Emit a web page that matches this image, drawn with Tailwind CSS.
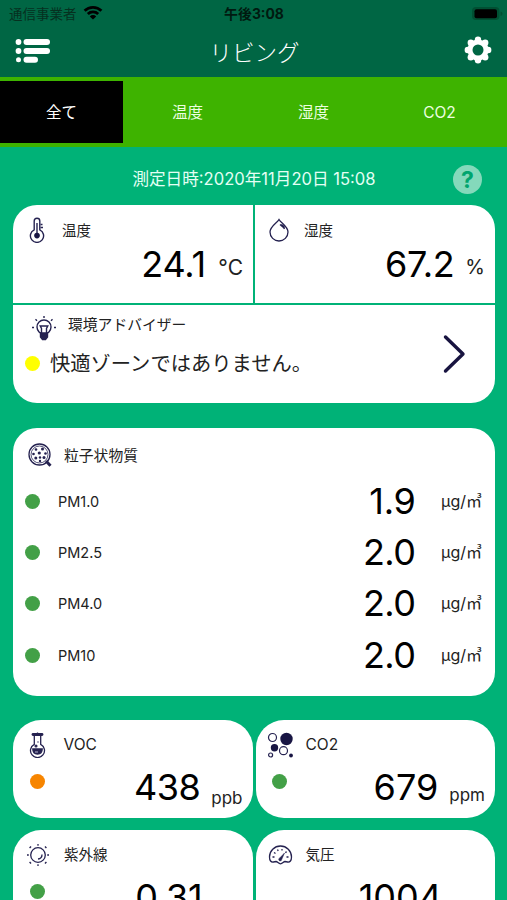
<!DOCTYPE html>
<html lang="ja">
<head>
<meta charset="utf-8">
<title>リビング</title>
<script src="https://cdn.jsdelivr.net/npm/@tailwindcss/browser@4"></script>
</head>
<body class="h-[900px] w-[507px] overflow-hidden bg-[#00b277] font-['Inter','Noto_Sans_CJK_JP',sans-serif] text-[#222]">
<header class="h-[77px] bg-[#006644]">
  <div class="grid h-7 grid-cols-3 items-center pl-[9px] pr-1 text-[13.5px] leading-7">
    <div class="flex items-center gap-1.5 text-[#06301f]"><span>通信事業者</span>
      <svg class="h-[15px] w-[20px] -mt-1" viewBox="0 0 20 15" fill="none" stroke="#000" stroke-width="2.8"><path d="M1.6 5.8a12 12 0 0 1 16.8 0M4.8 9a7.5 7.5 0 0 1 10.4 0"/><path d="M10 14.5 6.8 11.4a4.6 4.6 0 0 1 6.4 0z" fill="#000" stroke="none"/></svg>
    </div>
    <div class="-ml-1 text-center text-[13.900px] font-bold text-[#001a10]">午後3:08</div>
    <svg class="h-4 w-[32px] justify-self-end" viewBox="0 0 32 16"><rect x="1" y="1" width="27.500" height="13" rx="4" fill="#005033"/><rect x="3.500" y="3.300" width="22.500" height="9" rx="2" fill="#000"/><path d="M29.500 5.500q2 .5 2 2.300t-2 2.300z" fill="#005033"/></svg>
  </div>
  <div class="flex h-[46px] items-center justify-between px-[15px]">
    <svg class="h-[26px] w-[36px]" viewBox="0 0 36 26" fill="#fff"><circle cx="3.500" cy="4" r="2.900"/><rect x="8.500" y="1" width="26.500" height="6" rx="3"/><circle cx="3.500" cy="13" r="2.900"/><rect x="8.500" y="10" width="26.500" height="6" rx="3"/><circle cx="3.500" cy="21.700" r="2.500"/><rect x="8.500" y="18.700" width="14.500" height="6" rx="3"/></svg>
    <h1 class="pt-1 pr-[6px] text-[22.500px] font-light leading-[42px] text-white">リビング</h1>
    <svg class="-mt-[2px] h-[28px] w-[28px]" viewBox="0 0 28 28"><g fill="#fff"><circle cx="14" cy="14" r="10.500"/><circle cx="14" cy="3.800" r="3.200"/><circle cx="21.200" cy="6.800" r="3.200"/><circle cx="24.200" cy="14" r="3.200"/><circle cx="21.200" cy="21.200" r="3.200"/><circle cx="14" cy="24.200" r="3.200"/><circle cx="6.800" cy="21.200" r="3.200"/><circle cx="3.800" cy="14" r="3.200"/><circle cx="6.800" cy="6.800" r="3.200"/></g><circle cx="14" cy="14" r="5.500" fill="#006644"/></svg>
  </div>
</header>
<nav class="grid h-[70px] grid-cols-4 gap-[3px] bg-[#3eb300] py-1 pr-1.5 text-center text-[15.500px] leading-[64px] text-[#ecffe0]">
  <div class="h-[62px] bg-black text-white">全て</div><div>温度</div><div>湿度</div><div>CO2</div>
</nav>
<div class="grid h-[58px] grid-cols-[1fr_auto_1fr] pl-4 pr-[25px] pt-[18px]">
  <div></div>
  <p class="h-[27px] pl-[10px] pt-px text-[16.600px] leading-[27px] text-[#e4fff4]">測定日時:2020年11月20日 15:08</p>
  <div class="flex size-[29px] items-center justify-center justify-self-end rounded-full bg-[#84d9bb] pt-px text-[23px] font-bold text-[#00a56e]">?</div>
</div>

<main class="px-[13px] pr-3">
  <section class="h-[198px] overflow-hidden rounded-[24px]">
    <div class="grid h-[97.500px] grid-cols-[239.500px_1fr] gap-[2.500px]">
      <div class="bg-white pt-[11px]">
        <div class="flex h-[28px] items-center">
          <svg class="ml-[16px] h-[26px] w-4" viewBox="0 0 16 26" fill="none" stroke="#252250" stroke-width="1.400"><path d="M5.200 12.800V4a2.800 2.800 0 0 1 5.600 0v8.800a6.600 6.600 0 1 1-5.600 0z"/><path d="M8 6v10M11.500 7.500h2M11.500 10.500h2.500" /><circle cx="8" cy="18.600" r="2.800" fill="#181543" stroke="none"/></svg>
          <h2 class="ml-[17px] pt-px text-[14.500px] leading-7">温度</h2>
        </div>
        <div class="flex h-[41px] items-center justify-end pr-[9.500px]"><span class="text-[36px] leading-[41px] tracking-[-0.200px] text-black">24.1</span><span class="ml-[12.500px] pt-[5px] text-[21px] leading-[41px]">°C</span></div>
      </div>
      <div class="bg-white pt-[11px]">
        <div class="flex h-[28px] items-center">
          <svg class="ml-[13px] h-[24px] w-[22px]" viewBox="0 0 22 24" fill="none" stroke="#252250" stroke-width="1.300"><path d="M11 1.500C9 5 2 8.500 2 14a9 9 0 0 0 18 0C20 8.500 13 5 11 1.500z"/><path d="M12 6.500c2 1.500 3.500 2.500 4.500 4.500M13.500 6.500c1.500 1 2.500 2 3.200 3.200"/></svg>
          <h2 class="ml-[14px] pt-px text-[14.500px] leading-7">湿度</h2>
        </div>
        <div class="flex h-[41px] items-center justify-end pr-[10px]"><span class="text-[36px] leading-[41px] tracking-[-0.300px] text-black">67.2</span><span class="ml-[11px] pt-[5px] text-[20px] leading-[41px]">%</span></div>
      </div>
    </div>
    <div class="mt-[2.500px] flex h-[98px] justify-between bg-white">
      <div>
        <div class="flex h-[38px] items-center">
          <svg class="ml-[18px] mt-[9px] h-[25px] w-[26px]" viewBox="0 0 26 25" fill="none" stroke="#252250" stroke-width="1.400"><circle cx="13" cy="11" r="7"/><path d="M10.500 17v-4.500l-1.300-2.500h7.600l-1.300 2.500v4.500"/><path d="M9.500 17h7v4l-2 2.500h-3l-2-2.500z" fill="#252250"/><path d="M13 0v2M4.500 3.200 6 4.700M21.500 3.200 20 4.700M1 11.500h2M23 11.500h2"/></svg>
          <h2 class="ml-[11px] pt-px text-[14.800px] leading-[38px]">環境アドバイザー</h2>
        </div>
        <div class="flex h-[40px] items-center"><span class="ml-[12px] mt-px size-[15px] rounded-full bg-[#ffff00]"></span><span class="ml-[10px] pt-[2px] text-[20.300px] leading-[40px]">快適ゾーンではありません。</span></div>
      </div>
      <svg class="mr-[29px] mt-[29px] h-[40px] w-[24px]" viewBox="0 0 24 40" fill="none" stroke="#181440" stroke-width="3.400" stroke-linecap="round" stroke-linejoin="round"><path d="M3.500 3 21 20 3.500 37"/></svg>
    </div>
  </section>

  <section class="mt-[24.500px] h-[268.500px] rounded-[24px] bg-white pt-[11px]">
    <div class="flex h-[36.500px] items-center pb-[2px]">
      <svg class="ml-[15px] h-[25px] w-[25px]" viewBox="0 0 25 25" fill="none" stroke="#252250" stroke-width="1.300"><circle cx="11.500" cy="11.500" r="10.500"/><circle cx="11.500" cy="11.500" r="8.500" stroke-width=".8"/><path d="m18 18 4.500 4.700" stroke-width="3"/><g fill="#252250" stroke="none"><circle cx="8" cy="6.500" r="1.300"/><circle cx="14.500" cy="6" r="1.500"/><circle cx="5.500" cy="11" r="1.300"/><circle cx="11.300" cy="10" r="1.600"/><circle cx="17.500" cy="10.500" r="1.300"/><circle cx="7.800" cy="15" r="1.500"/><circle cx="12" cy="14.500" r="1.200"/><circle cx="16" cy="14.500" r="1.500"/><circle cx="12" cy="18" r="1.200"/></g></svg>
      <h2 class="ml-[11px] text-[14.800px] leading-[34px]">粒子状物質</h2>
    </div>
    <div class="grid grid-rows-[repeat(4,51.300px)] pl-3 pr-[13px] pt-[0.500px] text-[14.500px] leading-[51px]">
      <div class="flex items-center"><span class="size-[15px] rounded-full bg-[#43a047]"></span><span class="ml-[18px] flex-1">PM1.0</span><span class="text-[36px] tracking-[-0.300px] text-black">1.9</span><span class="w-[66.500px] text-right text-[16px]">µg/㎥</span></div>
      <div class="flex items-center"><span class="size-[15px] rounded-full bg-[#43a047]"></span><span class="ml-[18px] flex-1">PM2.5</span><span class="text-[36px] tracking-[-0.500px] text-black">2.0</span><span class="w-[66.500px] text-right text-[16px]">µg/㎥</span></div>
      <div class="flex items-center"><span class="size-[15px] rounded-full bg-[#43a047]"></span><span class="ml-[18px] flex-1">PM4.0</span><span class="text-[36px] tracking-[-0.500px] text-black">2.0</span><span class="w-[66.500px] text-right text-[16px]">µg/㎥</span></div>
      <div class="flex items-center"><span class="size-[15px] rounded-full bg-[#43a047]"></span><span class="ml-[18px] flex-1">PM10</span><span class="text-[36px] tracking-[-0.500px] text-black">2.0</span><span class="w-[66.500px] text-right text-[16px]">µg/㎥</span></div>
    </div>
  </section>

  <div class="mt-[24px] grid grid-cols-[239.500px_239.500px] gap-x-[3px] gap-y-[12px]">
    <section class="h-[98px] rounded-[28px] bg-white pt-[11px]">
      <div class="flex h-[28px] items-center">
        <svg class="ml-[16px] h-[26px] w-[17px]" viewBox="0 0 17 26" fill="none" stroke="#252250" stroke-width="1.300"><path d="M5.300 3.500v8.800a7 7 0 1 0 6.400 0V3.500"/><path d="M4 2.500h9" stroke-width="2.800" stroke-linecap="round"/><path d="M8.500.5v1"/><path d="M3.800 17h9.400c0 3-2 5-4.700 5s-4.700-2-4.700-5z" fill="#252250"/><circle cx="7" cy="14" r=".9"/><path d="M9 9v2M6 20h3" stroke="#8885a5"/></svg>
        <h2 class="ml-[17.500px] text-[15.500px] leading-7">VOC</h2>
      </div>
      <div class="flex h-[56px] pl-[17px] pr-[10px]"><span class="mt-[15px] size-[15px] rounded-full bg-[#f78500]"></span><span class="flex-1 text-right text-[36px] leading-[56px] tracking-[-0.500px] text-black">438</span><span class="ml-[11px] pt-[11px] text-[17px] leading-[56px]">ppb</span></div>
    </section>
    <section class="h-[98px] rounded-[28px] bg-white pt-[11px]">
      <div class="flex h-[28px] items-center">
        <svg class="ml-[11px] h-[26px] w-[27px]" viewBox="0 0 27 26" fill="none" stroke="#252250" stroke-width="1.200"><circle cx="5.500" cy="5.500" r="4"/><circle cx="19.500" cy="7" r="6.200" fill="#181543" stroke="none"/><circle cx="7.500" cy="15.700" r="3.700" fill="#181543" stroke="none"/><circle cx="16.500" cy="18.700" r="4"/><circle cx="3.600" cy="23" r="2"/><circle cx="24" cy="23.500" r="1.900" fill="#181543" stroke="none"/></svg>
        <h2 class="ml-[12px] text-[15.500px] leading-7">CO2</h2>
      </div>
      <div class="flex h-[56px] pl-[16px] pr-[10px]"><span class="mt-[15px] size-[15px] rounded-full bg-[#43a047]"></span><span class="flex-1 text-right text-[36px] leading-[56px] text-black">679</span><span class="ml-[11px] pt-[8px] text-[17px] leading-[56px]">ppm</span></div>
    </section>
    <section class="h-[98px] rounded-[28px] bg-white pt-[11px]">
      <div class="flex h-[28px] items-center">
        <svg class="ml-[13px] h-[24px] w-[24px]" viewBox="0 0 24 24" fill="none" stroke="#252250" stroke-width="1.300"><circle cx="12" cy="12" r="7.300"/><path d="M16 11.500a4.500 4.500 0 0 1-4 4.500" /><path d="M12 1v1.800M12 21.200V23M1 12h1.800M21.200 12H23"/><path d="m3.800 3.800 1 1M20.200 3.800l-1 1M3.800 20.200l1-1M20.200 20.200l-1-1" stroke-width="2"/></svg>
        <h2 class="ml-[14px] text-[14.500px] leading-7">紫外線</h2>
      </div>
      <div class="flex h-[56px] pl-[17px]"><span class="mt-[15px] size-[15px] rounded-full bg-[#43a047]"></span><span class="flex-1 pr-[50px] text-right text-[36px] leading-[56px] tracking-[-0.200px] text-black">0.31</span></div>
    </section>
    <section class="h-[98px] rounded-[28px] bg-white pt-[11px]">
      <div class="flex h-[28px] items-center">
        <svg class="ml-[12px] h-[20px] w-[25px]" viewBox="0 0 25 20" fill="none" stroke="#252250" stroke-width="1.300"><path d="M5.500 17C3 17.500 1.500 15.500 1.500 12a11 11 0 0 1 22 0c0 3.500-1.500 5.500-4 5l-2.500-.5c-1.500 0-2.500 2.300-4.500 2.300S9.500 16.500 8 16.500z"/><path d="M4.500 12h2M6 7.500l1.500 1M9.500 4.500l.7 1.500M14 4v1.500M18.500 6.500l-1 1.300M20.500 12h-2"/><path d="m16.500 8-2.800 6.500a1.500 1.500 0 1 1-2-1.500z" fill="#252250" stroke-width=".5"/></svg>
        <h2 class="ml-[13px] text-[14.500px] leading-7">気圧</h2>
      </div>
      <div class="h-[56px] pr-[53px] text-right text-[36px] leading-[56px] text-black">1004</div>
    </section>
  </div>
</main>
</body>
</html>
